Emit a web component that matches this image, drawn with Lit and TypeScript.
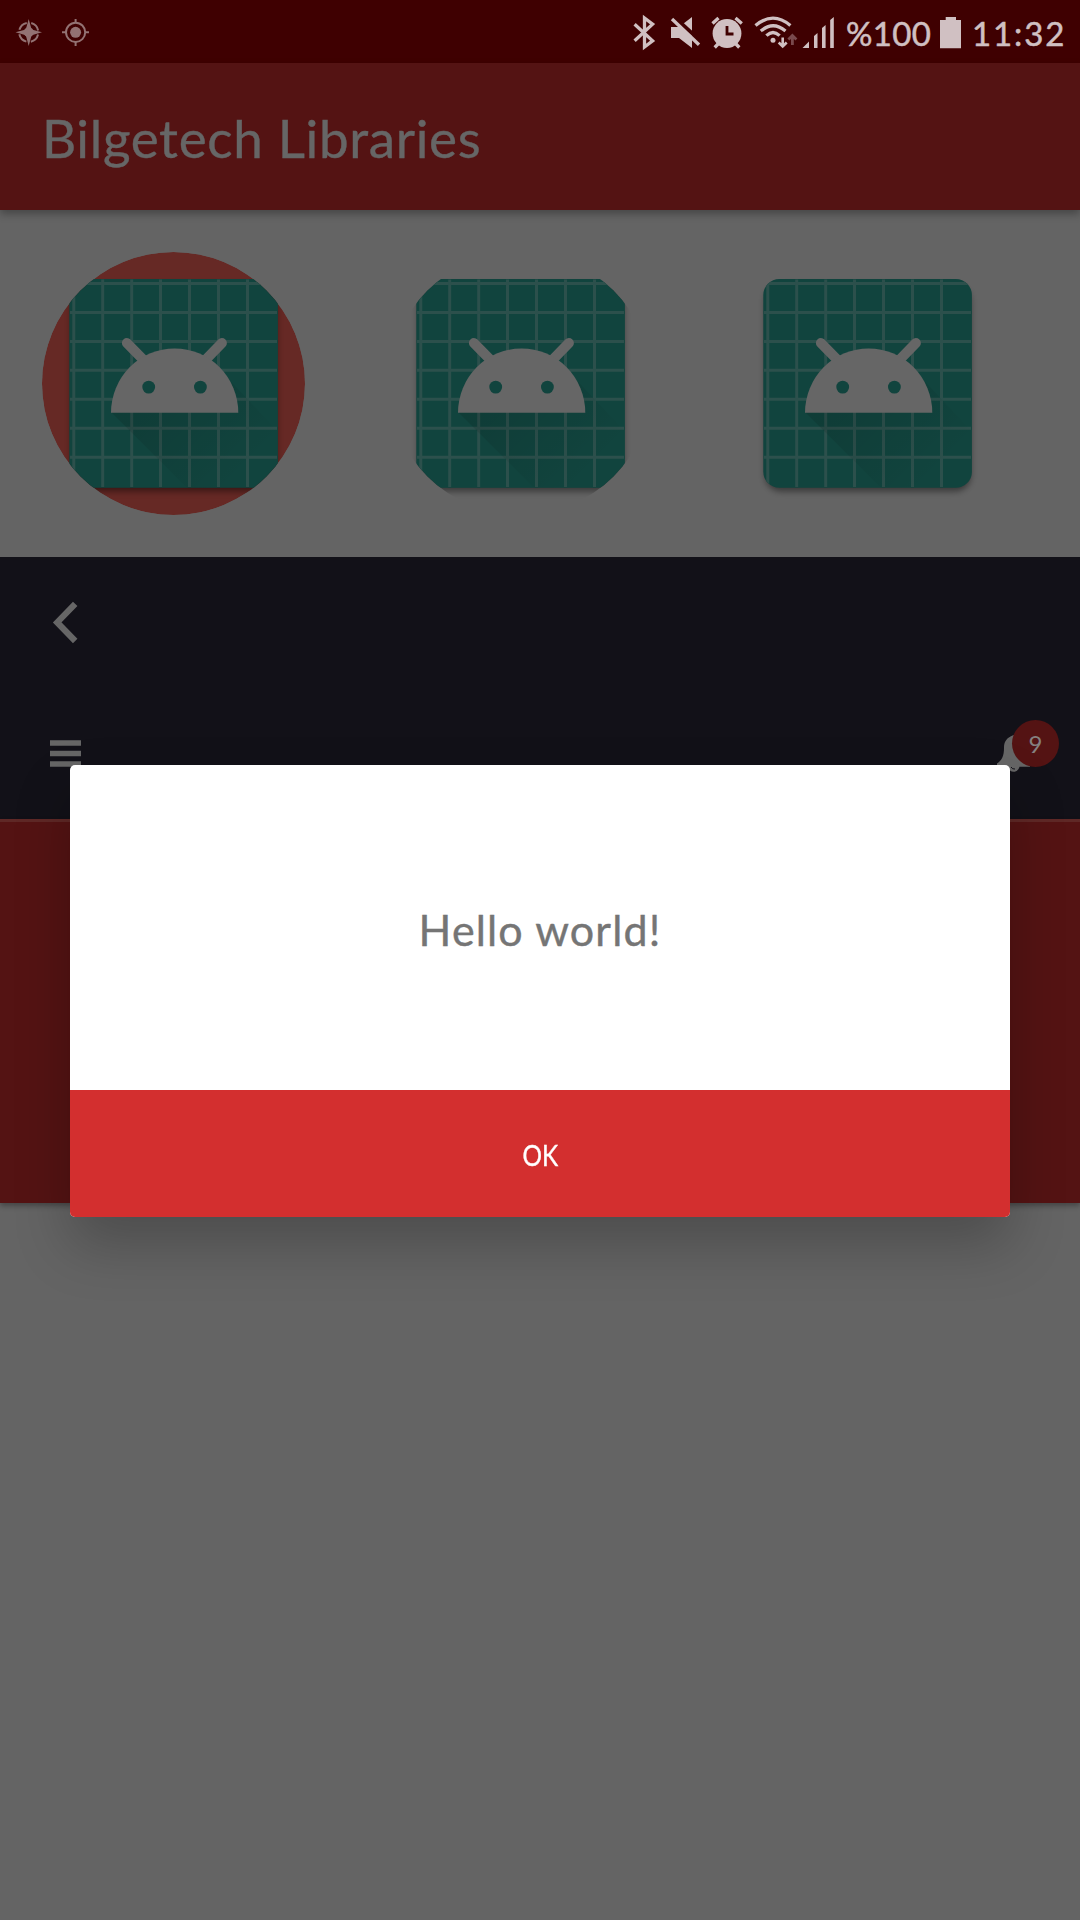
import { LitElement, html, css, svg } from "lit";
import { customElement, property } from "lit/decorators.js";

@customElement("status-bar")
class StatusBar extends LitElement {
  static styles = css`
    :host { display: flex; height: 63px; background: #3f0001; color: #d0c0c2; }
    .notices { flex: 1; }
    svg { display: block; fill: #d0c0c2; stroke: none; }
    .line { fill: none; stroke: #d0c0c2; stroke-width: 3.3; }
    .thin { stroke-width: 2.6; }
    .gap { fill: none; stroke: #3f0001; stroke-width: 4; }
    .hands { stroke-width: 2.8; }
    .dim { fill: none; stroke: #7a4a4d; stroke-width: 2.8; }
    .faint { fill: #937273; }
    .ring { fill: none; stroke: #937273; stroke-width: 2; }
    .text {
      font: 33px/63px Lato, sans-serif; white-space: nowrap; padding-top: 2px; height: 61px;
      -webkit-text-stroke: 0.5px #d0c0c2;
    }
    .level { width: 92px; letter-spacing: 0.3px; }
    .time { width: 108px; letter-spacing: 1.9px; }
  `;

  render() {
    return html`
      <div class="notices">
        <svg width="120" height="63" viewBox="0 0 120 63">
          <circle class="ring" cx="28.7" cy="32.3" r="9.6" stroke-dasharray="10.5 4.58" stroke-dashoffset="-2.3"></circle>
          <path class="faint" d="M28.7 19L31.6 29.4L42 32.3L31.6 35.2L28.7 46L25.8 35.2L15.5 32.3L25.8 29.4Z"></path>
          <circle class="faint" cx="28.7" cy="32.3" r="5"></circle>
          <circle class="ring" cx="75.6" cy="32.3" r="9.6"></circle>
          <circle class="faint" cx="75.6" cy="32.3" r="5.5"></circle>
          <path class="ring" d="M75.6 19V23M75.6 42V46M62 32.3H66M85.5 32.3H89"></path>
        </svg>
      </div>
      <svg width="216" height="63" viewBox="630 0 216 63">
        <path class="line" d="M634.6 24.2L652.6 40.8L644.5 47V18L652.6 24.2L634.6 40.8"></path>
        <path d="M671 27H679L692 17V48L679 38H671Z"></path>
        <path class="gap" d="M673 16L702 42.5"></path>
        <path class="line" d="M672 19L699 44.7"></path>
        <circle cx="727" cy="33.5" r="14.4"></circle>
        <path class="line" d="M712.5 23.5L718.5 18M735.5 18L741.8 23.5M719 43L714.7 47.5M735 43L739.3 47.5"></path>
        <path class="gap hands" d="M727 26V34H733.5"></path>
        <path class="line" d="M755.5 25.5Q773 10.8 790.4 25.5M760.8 31Q773 20.5 785.5 31M766.4 35.6Q773 29.3 779.6 35.6"></path>
        <circle cx="773" cy="40.2" r="2.5"></circle>
        <path class="line thin" d="M782.7 37.5V46.5M778.7 42.5L782.7 46.5L786.7 42.5"></path>
        <path class="dim" d="M792.4 45V35.5M788.4 39.5L792.4 35.5L796.4 39.5"></path>
        <path d="M802.5 48L809 41.5V48ZM814 48V36L817.5 33V48ZM822 48V28L825.6 25V48ZM830.2 48V20L833.8 17V48Z"></path>
      </svg>
      <div class="text level">%100</div>
      <svg width="34" height="63" viewBox="938 0 34 63"><path d="M940 20H945.7V17H956V20H961V48.3H940Z"></path></svg>
      <div class="text time">11:32</div>
    `;
  }
}

@customElement("launcher-icon")
class LauncherIcon extends LitElement {
  @property() shape = "plain";

  static styles = css`
    :host { display: block; width: 263px; height: 263px; }
    svg { display: block; overflow: visible; }
    .disc { fill: #662925; }
    .tile { fill: #11443e; }
    .grid { fill: none; stroke: #2c504c; stroke-width: 3; filter: blur(0.6px); }
    .head { fill: #666; }
    .antenna { stroke: #666; stroke-width: 10; stroke-linecap: round; }
    .eye { fill: #11443e; }
    .drop { fill: #000; opacity: 0.42; filter: blur(3px); }
  `;

  render() {
    const radius = this.shape === "plain" ? 16 : 0;
    const clip = this.shape === "plain" ? "" : "url(#round)";
    const steps = [-99.7, -70.8, -41.8, -13, 16, 45, 74];
    return html`
      <svg width="263" height="263" viewBox="-131.5 -131.5 263 263">
        <defs>
          <clipPath id="round"><circle r="131.5"></circle></clipPath>
          <clipPath id="tile"><rect x="-104.2" y="-104.5" width="208.6" height="208.8" rx=${radius}></rect></clipPath>
          <linearGradient id="cast" gradientUnits="userSpaceOnUse" x1="-10" y1="0" x2="75" y2="85">
            <stop offset="0" stop-color="#000" stop-opacity="0.11"></stop>
            <stop offset="1" stop-color="#000" stop-opacity="0"></stop>
          </linearGradient>
        </defs>
        <g clip-path=${clip}>
          ${this.shape === "disc" ? svg`<circle class="disc" r="131.5"></circle>` : ""}
          <rect class="drop" x="-102.5" y="-98" width="206" height="206" rx=${radius}></rect>
          <rect class="tile" x="-104.2" y="-104.5" width="208.6" height="208.8" rx=${radius}></rect>
          <g clip-path="url(#tile)">
            ${steps.map((p) => svg`<path class="grid" d="M${p} -104V103.5M-103.5 ${p - 0.2}H103.5"></path>`)}
            <path fill="url(#cast)" d="M-62 29L13.5 104.3H104.4V48L48 -12Z"></path>
          </g>
          <path class="antenna" d="M-46.6 -40.4L-26 -19.5M48.4 -40.4L28 -19.5"></path>
          <path class="head" d="M-62.5 29.3A63.6 64.3 0 0 1 64.8 29.3Z"></path>
          <circle class="eye" cx="-24.8" cy="3.6" r="6.4"></circle>
          <circle class="eye" cx="26.9" cy="3.6" r="6.4"></circle>
        </g>
      </svg>
    `;
  }
}

@customElement("app-root")
class AppRoot extends LitElement {
  static styles = css`
    :host {
      display: flex; flex-direction: column; position: relative; overflow: hidden;
      width: 1080px; height: 1920px; background: #646464; font-family: Lato, sans-serif;
    }
    .toolbar {
      box-sizing: border-box; height: 147px; background: #541313; display: flex; align-items: center;
      padding: 2px 0 0 42px; box-shadow: 0 4px 8px rgba(0, 0, 0, 0.3); position: relative;
    }
    h1 {
      margin: 0; font-size: 53px; font-weight: 400; color: #666; line-height: 64px;
      letter-spacing: 0.65px; -webkit-text-stroke: 0.4px #666;
    }
    .icons { display: flex; gap: 84px; padding: 42px; height: 263px; }
    .nav { height: 131px; background: #121118; display: flex; justify-content: space-between; }
    .nav svg { display: block; }
    .mark { fill: #666; }
    .chevron { fill: none; stroke: #666; stroke-width: 6.2; }
    .bell { position: relative; width: 100px; }
    .badge {
      position: absolute; left: 32px; top: 32px; width: 47px; height: 47px; border-radius: 50%;
      background: #541313; color: #858080; font-size: 24px; line-height: 48px; text-align: center;
    }
    .panel {
      height: 381px; border-top: 3px solid #5f2826; background: #541313;
      box-shadow: 0 3px 5px rgba(0, 0, 0, 0.3);
    }
    .dialog {
      position: absolute; left: 70px; top: 765px; width: 940px; height: 452px;
      display: flex; flex-direction: column; border-radius: 5px; overflow: hidden; background: #fff;
      box-shadow: 0 28px 56px rgba(0, 0, 0, 0.23);
    }
    .message {
      flex: 1; display: flex; align-items: center; justify-content: center;
      color: #757575; font-size: 43px; padding-top: 4px; letter-spacing: 1.15px;
      -webkit-text-stroke: 0.4px #757575;
    }
    .ok {
      height: 127px; border: 0; padding: 2px 0 0; background: #d32f2f; color: #fff;
      font: 29px Lato, sans-serif;
    }
    .label { display: inline-block; transform: scaleX(0.84); -webkit-text-stroke: 0.4px #fff; }
  `;

  render() {
    return html`
      <status-bar></status-bar>
      <header class="toolbar"><h1>Bilgetech Libraries</h1></header>
      <div class="icons">
        <launcher-icon shape="disc"></launcher-icon>
        <launcher-icon shape="clipped"></launcher-icon>
        <launcher-icon></launcher-icon>
      </div>
      <div class="nav">
        <svg width="131" height="131" viewBox="0 557 131 131"><path class="chevron" d="M75.2 603.8L57.2 622.4L75.2 641"></path></svg>
      </div>
      <div class="nav">
        <svg width="131" height="131" viewBox="0 688 131 131"><path class="mark" d="M50 740.2h31v5.5h-31zM50 750.8h31v5.4h-31zM50 761.2h31v5.5h-31z"></path></svg>
        <div class="bell">
          <svg width="100" height="131" viewBox="980 688 100 131">
            <path class="mark" d="M1013.5 735C1006 738 1004 742 1004 748C1004 756 1002 760 997 763.5V766.7H1008C1009 773.5 1018 773.5 1019.5 766.7H1030V763.5C1025 760 1023 756 1023 748C1023 742 1021 738 1013.5 735Z"></path>
            <path d="M1011 767Q1012.5 769.5 1015 769" fill="none" stroke="#121118" stroke-width="1"></path>
          </svg>
          <span class="badge">9</span>
        </div>
      </div>
      <div class="panel"></div>
      <section class="dialog">
        <div class="message">Hello world!</div>
        <button class="ok"><span class="label">OK</span></button>
      </section>
    `;
  }
}
